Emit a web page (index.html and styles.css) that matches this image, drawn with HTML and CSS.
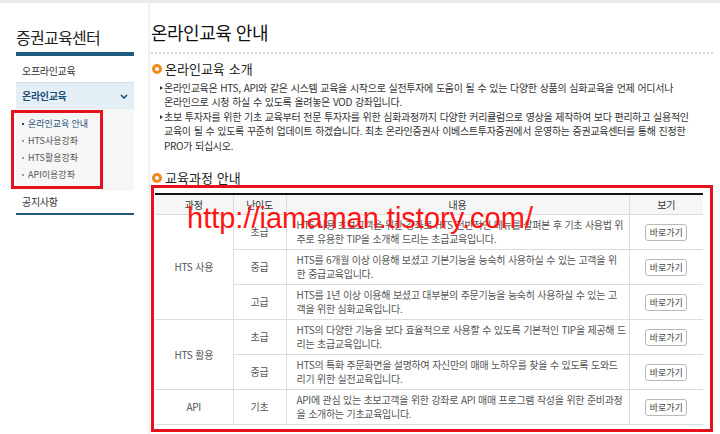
FILE: index.html
```html
<!DOCTYPE html>
<html>

<head>
	<meta charset="utf-8">
	<link rel="stylesheet" href="styles.css">
</head>

<body>
	<div class="page">
		<aside class="side">
			<h1 class="side-title">증권교육센터</h1>
			<ul class="side-menu">
				<li class="side-item">오프라인교육</li>
				<li class="side-item open">
					<span>온라인교육</span>
					<svg class="chevron" width="8" height="5" viewBox="0 0 8 5">
						<path d="M1 1 L4 4 L7 1" fill="none" stroke="#1d4f78" stroke-width="1.6" />
					</svg>
				</li>
				<li class="sub-wrap">
					<ul class="sub-menu">
						<li class="active">온라인교육 안내</li>
						<li>HTS사용강좌</li>
						<li>HTS활용강좌</li>
						<li>API이용강좌</li>
					</ul>
				</li>
				<li class="side-item last">공지사항</li>
			</ul>
		</aside>

		<main class="content">
			<h2 class="page-title">온라인교육 안내</h2>

			<h3 class="sec-title">온라인교육 소개</h3>
			<ul class="intro">
				<li>온라인교육은 HTS, API와 같은 시스템 교육을 시작으로 실전투자에 도움이 될 수 있는 다양한 상품의 심화교육을 언제 어디서나 온라인으로 시청 하실 수 있도록 올려놓은 VOD 강좌입니다.</li>
				<li>초보 투자자를 위한 기초 교육부터 전문 투자자를 위한 심화과정까지 다양한 커리큘럼으로 영상을 제작하여 보다 편리하고 실용적인 교육이 될 수 있도록 꾸준히 업데이트 하겠습니다. 최초 온라인증권사 이베스트투자증권에서 운영하는 증권교육센터를 통해 진정한 PRO가 되십시오.</li>
			</ul>

			<h3 class="sec-title second">교육과정 안내</h3>
			<div class="table-box">
				<table class="course">
					<colgroup>
						<col class="c-course">
						<col class="c-level">
						<col class="c-desc">
						<col class="c-view">
					</colgroup>
					<thead>
						<tr>
							<th>과정</th>
							<th>난이도</th>
							<th>내용</th>
							<th>보기</th>
						</tr>
					</thead>
					<tbody>
						<tr>
							<td rowspan="3">HTS 사용</td>
							<td>초급</td>
							<td class="desc">HTS 사용 초보고객을 위한 강좌로 HTS 전반적인 메뉴를 살펴본 후 기초 사용법 위<br>주로 유용한 TIP을 소개해 드리는 초급교육입니다.</td>
							<td><button>바로가기</button></td>
						</tr>
						<tr>
							<td>중급</td>
							<td class="desc">HTS를 6개월 이상 이용해 보셨고 기본기능을 능숙히 사용하실 수 있는 고객을 위<br>한 중급교육입니다.</td>
							<td><button>바로가기</button></td>
						</tr>
						<tr>
							<td>고급</td>
							<td class="desc">HTS를 1년 이상 이용해 보셨고 대부분의 주문기능을 능숙히 사용하실 수 있는 고<br>객을 위한 심화교육입니다.</td>
							<td><button>바로가기</button></td>
						</tr>
						<tr>
							<td rowspan="2">HTS 활용</td>
							<td>초급</td>
							<td class="desc">HTS의 다양한 기능을 보다 효율적으로 사용할 수 있도록 기본적인 TIP을 제공해 드<br>리는 초급교육입니다.</td>
							<td><button>바로가기</button></td>
						</tr>
						<tr>
							<td>중급</td>
							<td class="desc">HTS의 특화 주문화면을 설명하여 자신만의 매매 노하우를 찾을 수 있도록 도와드<br>리기 위한 실전교육입니다.</td>
							<td><button>바로가기</button></td>
						</tr>
						<tr>
							<td>API</td>
							<td>기초</td>
							<td class="desc">API에 관심 있는 초보고객을 위한 강좌로 API 매매 프로그램 작성을 위한 준비과정<br>을 소개하는 기초교육입니다.</td>
							<td><button>바로가기</button></td>
						</tr>
					</tbody>
				</table>
				<div class="watermark">http://iamaman.tistory.com/</div>
			</div>
		</main>
	</div>
</body>

</html>
```

FILE: styles.css
```css
:root {
	--navy: #1f5a7c;
	--blue-text: #1d4f78;
	--orange: #f0891a;
	--mark: #e5121b;
	--line: #dcdcdc;
}

body {
	margin: 0;
	border-top: 3px solid #ececec;
	background: #fff;
	color: #333;
	font-family: "Noto Sans CJK KR", sans-serif;
	font-size: 10px;
	letter-spacing: -0.3px;
	word-spacing: 1px;
}

ul {
	list-style: none;
	margin: 0;
	padding: 0;
}

.page {
	display: flex;
	align-items: flex-start;
	min-height: 431px;
}

/* left menu */
.side {
	width: 118px;
	margin-left: 16px;
}

.side-title {
	margin: 24px 0 0;
	padding-bottom: 5px;
	border-bottom: 4px solid var(--navy);
	font-size: 16px;
	line-height: 20px;
	font-weight: normal;
	letter-spacing: -0.7px;
	color: #222;
}

.side-item {
	padding: 3px 0 0 6px;
	line-height: 23px;
	color: #333;
	border-bottom: 1px solid #cfe0ea;
}

.side-item.open {
	display: flex;
	justify-content: space-between;
	align-items: center;
	height: 26px;
	padding: 0 6px;
	line-height: 26px;
	background: #e4eff5;
	color: var(--blue-text);
	font-weight: bold;
	border-bottom: none;
}

.side-item.last {
	padding-top: 0;
	line-height: 22px;
	border-bottom: 2px solid var(--navy);
}

.sub-wrap {
	padding: 1px 0 2px;
	background: #f6f6f6;
}

.sub-menu {
	width: 92px;
	margin-left: -5px;
	padding: 2px 0 3px 8px;
	border: 3px solid var(--mark);
	box-sizing: border-box;
}

.sub-menu li {
	display: flex;
	align-items: center;
	gap: 4px;
	font-size: 9px;
	line-height: 17px;
	letter-spacing: 0;
	word-spacing: 0;
	color: #555;
}

.sub-menu li::before {
	content: "";
	width: 2px;
	height: 2px;
	background: #999;
}

.sub-menu li.active {
	color: var(--blue-text);
}

.sub-menu li.active::before {
	background: var(--blue-text);
}

/* content */
.content {
	width: 562px;
	margin-left: 14px;
	padding-left: 1px;
	border-left: 2px solid #f2f2f2;
	min-height: 431px;
}

.page-title {
	margin: 18px 0 0;
	padding-bottom: 9px;
	border-bottom: 2px dotted #d6d6d6;
	font-size: 18px;
	line-height: 22px;
	font-weight: normal;
	letter-spacing: -0.5px;
	color: #111;
}

.sec-title {
	display: flex;
	align-items: center;
	gap: 3px;
	margin: 8px 0 0;
	font-size: 13px;
	line-height: 14px;
	font-weight: normal;
	letter-spacing: 0;
	color: #222;
}

.sec-title::before {
	content: "";
	width: 4px;
	height: 4px;
	border: 3px solid var(--orange);
	border-radius: 50%;
	margin-left: 1px;
}

.sec-title.second {
	margin-top: 18px;
}

.intro {
	margin-top: 5px;
	width: 540px;
	padding-left: 13px;
	line-height: 14.4px;
	word-break: keep-all;
	color: #333;
}

.intro li {
	position: relative;
}

.intro li::before {
	content: "";
	position: absolute;
	left: -4px;
	top: 5px;
	border-left: 3px solid #333;
	border-top: 2.5px solid transparent;
	border-bottom: 2.5px solid transparent;
}

/* course table */
.table-box {
	position: relative;
	width: 549px;
	padding: 5px 6px 4px 1px;
	border: 3px solid var(--mark);
}

.course {
	width: 548px;
	border-collapse: collapse;
	table-layout: fixed;
	border-top: 2px solid #111;
	color: #555;
}

.c-course { width: 78px; }
.c-level { width: 53px; }
.c-desc { width: 343px; }
.c-view { width: 74px; }

.course th {
	padding: 3px 0 2px;
	line-height: 14px;
	font-weight: normal;
	color: #333;
	background: #f6f6f6;
	border-bottom: 1px solid var(--line);
	border-left: 1px solid var(--line);
}

.course td {
	padding: 3px 0;
	line-height: 14px;
	text-align: center;
	border-bottom: 1px solid var(--line);
	border-left: 1px solid var(--line);
}

.course th:first-child,
.course tr td:first-child[rowspan],
.course tr:last-child td:first-child {
	border-left: none;
}

.course td.desc {
	padding: 3px 0 3px 10px;
	text-align: left;
	white-space: nowrap;
	word-spacing: 0.8px;
}

.course button {
	width: 42px;
	height: 17px;
	padding: 0;
	font-family: inherit;
	font-size: 9px;
	letter-spacing: 0;
	color: #444;
	background: #fff;
	border: 1px solid #b8b8b8;
	border-radius: 3px;
	cursor: pointer;
}

.watermark {
	position: absolute;
	left: 33px;
	top: 16px;
	font-family: "Liberation Sans", Arial, sans-serif;
	font-size: 29px;
	line-height: 1;
	letter-spacing: 0;
	word-spacing: 0;
	color: #ff1414;
	white-space: nowrap;
	pointer-events: none;
}
```
